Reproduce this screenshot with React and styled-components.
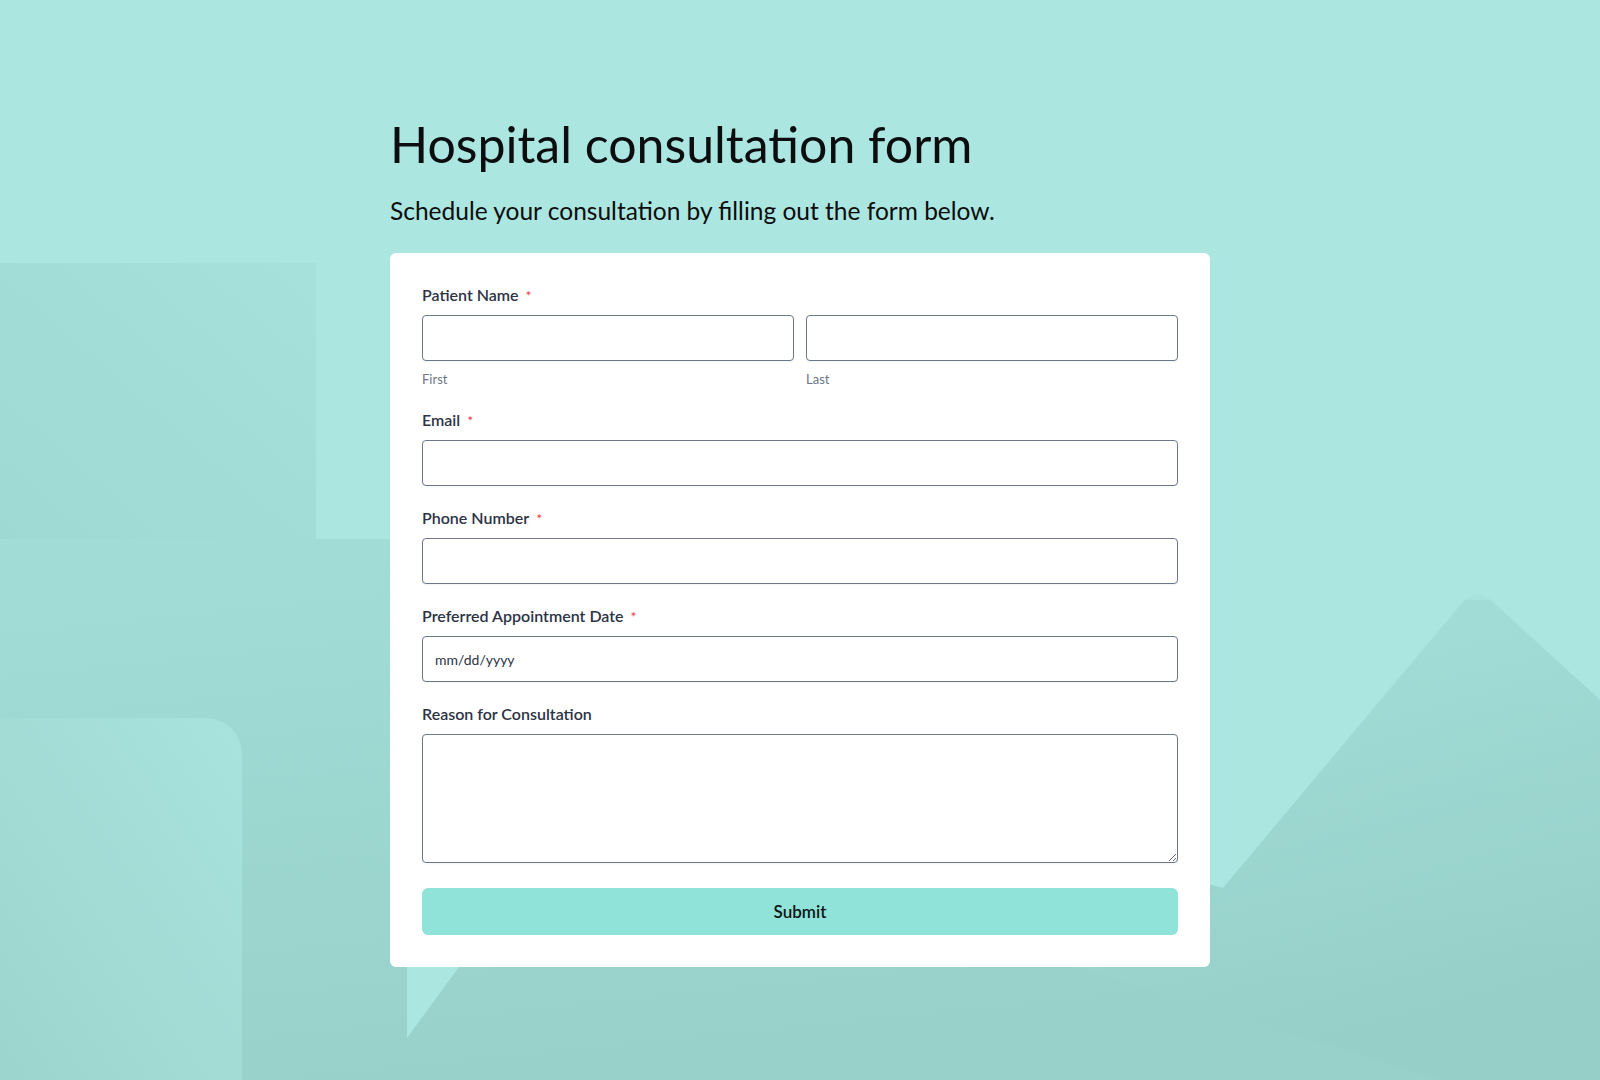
import React from 'react';
import styled, { createGlobalStyle } from 'styled-components';

const GlobalStyle = createGlobalStyle`
  html, body {
    margin: 0;
    padding: 0;
    background: #abe6e0;
  }
  * {
    box-sizing: border-box;
  }
`;

const Page = styled.div`
  position: relative;
  min-height: 1080px;
  overflow: hidden;
  font-family: 'Lato', 'Noto Sans', sans-serif;
`;

const Backdrop = styled.svg`
  position: absolute;
  top: 0;
  left: 0;
  width: 100%;
  height: 100%;
  z-index: 0;
`;

const Content = styled.main`
  position: relative;
  z-index: 1;
  width: 820px;
  margin: 0 auto;
  padding: 114px 0 80px;
`;

const Title = styled.h1`
  margin: 0;
  font-size: 50px;
  line-height: 60px;
  font-weight: 400;
  color: #0b0d0e;
`;

const Subtitle = styled.p`
  margin: 22px 0 0;
  font-size: 24.5px;
  line-height: 29px;
  color: #0b0d0e;
`;

const Card = styled.form`
  margin-top: 28px;
  background: #ffffff;
  border-radius: 6px;
  padding: 32px;
  display: flex;
  flex-direction: column;
  gap: 22px;
`;

const Field = styled.div`
  display: flex;
  flex-direction: column;
`;

const Label = styled.label`
  display: flex;
  align-items: center;
  gap: 7px;
  height: 20px;
  margin-bottom: 10px;
  font-size: 16px;
  line-height: 20px;
  font-weight: 600;
  color: #2c3345;
`;

const Required = styled.span`
  color: #f23a3c;
  font-size: 14px;
  line-height: 14px;
  font-weight: 400;
  margin-top: 2px;
`;

const Split = styled.div`
  display: grid;
  grid-template-columns: 1fr 1fr;
  gap: 12px;
`;

const Column = styled.div`
  display: flex;
  flex-direction: column;
`;

const Input = styled.input`
  width: 100%;
  height: 46px;
  padding: 0 12px;
  border: 1px solid #6f7687;
  border-radius: 4px;
  background: #ffffff;
  box-shadow: 0 1px 2px rgba(40, 50, 70, 0.06);
  font-family: inherit;
  font-size: 14px;
  color: #2c3345;
  outline: none;

  &::placeholder {
    color: #2c3345;
    opacity: 1;
  }
`;

const TextArea = styled.textarea`
  width: 100%;
  height: 129px;
  padding: 10px 12px;
  border: 1px solid #6f7687;
  border-radius: 4px;
  background: #ffffff;
  box-shadow: 0 1px 2px rgba(40, 50, 70, 0.06);
  font-family: inherit;
  font-size: 14px;
  color: #2c3345;
  outline: none;
  display: block;
`;

const SubLabel = styled.span`
  margin-top: 9px;
  font-size: 13px;
  line-height: 18px;
  color: #6f7687;
`;

const SubmitButton = styled.button`
  margin-top: 3px;
  height: 47px;
  width: 100%;
  border: none;
  border-radius: 6px;
  background: #8fe3d8;
  font-family: inherit;
  font-size: 17px;
  font-weight: 600;
  color: #0c1616;
  cursor: pointer;
`;

function Background() {
  return (
    <Backdrop viewBox="0 0 1600 1080" preserveAspectRatio="none" aria-hidden="true">
      <defs>
        <linearGradient id="lower" x1="0" y1="0" x2="0.3" y2="1">
          <stop offset="0" stopColor="#a3ddd7" />
          <stop offset="1" stopColor="#97d1ca" />
        </linearGradient>
        <linearGradient id="block" x1="1" y1="0" x2="0" y2="1">
          <stop offset="0" stopColor="#a6e1db" />
          <stop offset="1" stopColor="#9fd9d3" />
        </linearGradient>
        <linearGradient id="tab" x1="1" y1="0" x2="0" y2="1">
          <stop offset="0" stopColor="#a9e3dd" />
          <stop offset="1" stopColor="#9cd5ce" />
        </linearGradient>
        <linearGradient id="hill" x1="0" y1="0" x2="0.3" y2="1">
          <stop offset="0" stopColor="#abe6e0" />
          <stop offset="0.35" stopColor="#a2dcd6" />
          <stop offset="1" stopColor="#94cec7" />
        </linearGradient>
      </defs>
      <rect x="0" y="0" width="1600" height="1080" fill="#abe6e0" />
      <rect x="0" y="539" width="1600" height="541" fill="url(#lower)" />
      <rect x="0" y="263" width="316" height="276" fill="url(#block)" />
      <path d="M0 718 H206 A36 36 0 0 1 242 754 V1080 H0 Z" fill="url(#tab)" />
      <polygon
        points="407,530 1600,530 1600,700 1490,600 1465,600 1223,888 1182,877 700,700 459,967 407,1038"
        fill="#abe6e0"
      />
      <path
        d="M1223 888 L1462 602 Q1477 588 1492 600 L1600 700 V1080 H1440 L1077 967 Z"
        fill="url(#hill)"
        opacity="0.6"
      />
    </Backdrop>
  );
}

export default function App() {
  return (
    <Page>
      <GlobalStyle />
      <Background />
      <Content>
        <Title>Hospital consultation form</Title>
        <Subtitle>Schedule your consultation by filling out the form below.</Subtitle>
        <Card onSubmit={(e) => e.preventDefault()}>
          <Field>
            <Label>
              Patient Name <Required>*</Required>
            </Label>
            <Split>
              <Column>
                <Input type="text" aria-label="First" />
                <SubLabel>First</SubLabel>
              </Column>
              <Column>
                <Input type="text" aria-label="Last" />
                <SubLabel>Last</SubLabel>
              </Column>
            </Split>
          </Field>
          <Field>
            <Label>
              Email <Required>*</Required>
            </Label>
            <Input type="email" />
          </Field>
          <Field>
            <Label>
              Phone Number <Required>*</Required>
            </Label>
            <Input type="tel" />
          </Field>
          <Field>
            <Label>
              Preferred Appointment Date <Required>*</Required>
            </Label>
            <Input type="text" placeholder="mm/dd/yyyy" />
          </Field>
          <Field>
            <Label>Reason for Consultation</Label>
            <TextArea />
          </Field>
          <SubmitButton type="submit">Submit</SubmitButton>
        </Card>
      </Content>
    </Page>
  );
}
